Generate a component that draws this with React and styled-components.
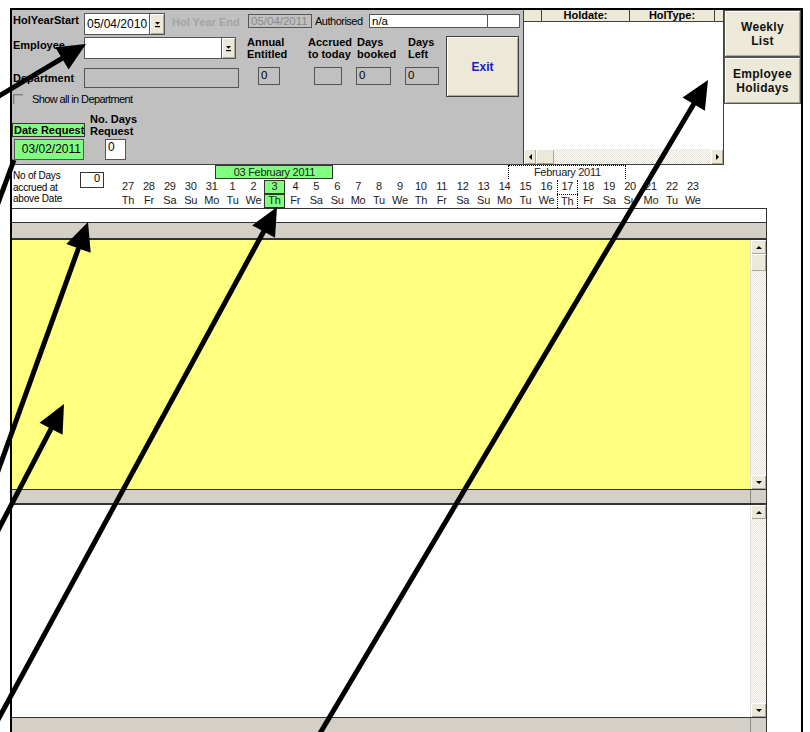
import React from "react";
import styled, { createGlobalStyle, css } from "styled-components";

const Global = createGlobalStyle`
  html, body { margin: 0; padding: 0; background: #fff; overflow: hidden; }
  body { font-family: "Liberation Sans", Arial, sans-serif; font-size: 11px; color: #000; }
  * { box-sizing: border-box; }
`;

const face = "#ece9d8";
const panel = "#c0c0c0";
const bar = "#d4d0c8";
const green = "#80ff80";
const yellow = "#ffff80";
const line = "#333";

const Page = styled.div`
  position: relative;
  width: 810px;
  height: 732px;
  padding: 8px 0 0 10px;
`;

const Frame = styled.div`
  width: 793px;
  height: 724px;
  border: 2px solid #000;
  border-bottom: none;
  display: flex;
  flex-direction: column;
  background: #fff;
`;

const TopSection = styled.div`
  display: flex;
  height: 155px;
  flex: none;
`;

const GrayPanel = styled.div`
  width: 512px;
  height: 155px;
  background: ${panel};
  border-right: 1px solid #404040;
  border-bottom: 1px solid #404040;
  display: flex;
  flex-direction: column;
`;

const Row = styled.div`
  display: flex;
  align-items: flex-start;
  height: ${(p) => p.$h || 22}px;
  margin-top: ${(p) => p.$mt || 0}px;
  flex: none;
`;

const Label = styled.div`
  font-weight: bold;
  font-size: 11px;
  line-height: 14px;
  width: ${(p) => p.$w}px;
  margin-top: ${(p) => p.$mt || 0}px;
  margin-left: ${(p) => p.$ml || 0}px;
  padding-left: ${(p) => p.$pl ?? 1}px;
  color: ${(p) => (p.$dim ? "#a4a4a4" : "#000")};
  white-space: nowrap;
  flex: none;
`;

const Plain = styled.div`
  font-size: 11px;
  line-height: 14px;
  letter-spacing: -0.5px;
  width: ${(p) => p.$w}px;
  margin-top: ${(p) => p.$mt || 0}px;
  margin-left: ${(p) => p.$ml || 0}px;
  white-space: nowrap;
  flex: none;
`;

const Box = styled.div`
  flex: none;
  width: ${(p) => p.$w}px;
  height: ${(p) => p.$h}px;
  margin-top: ${(p) => p.$mt || 0}px;
  margin-left: ${(p) => p.$ml || 0}px;
  border: 1px solid #555;
  background: ${(p) => p.$bg || "#fff"};
  color: ${(p) => p.$fg || "#000"};
  font-size: ${(p) => p.$fs || 12}px;
  line-height: ${(p) => (p.$lh ? p.$lh : p.$h - 2)}px;
  padding: 0 ${(p) => (p.$right ? 2 : 0)}px 0 ${(p) => (p.$right ? 0 : 2)}px;
  text-align: ${(p) => (p.$right ? "right" : "left")};
  white-space: nowrap;
  overflow: hidden;
`;

const DropButton = styled.div`
  flex: none;
  width: ${(p) => p.$w || 15}px;
  height: 22px;
  background: ${face};
  border: 1px solid #555;
  border-left: none;
  display: flex;
  align-items: center;
  justify-content: center;
  box-shadow: inset 1px 1px 0 #fff, inset -1px -1px 0 #aca899;
`;

const DropGlyph = () => (
  <svg width="7" height="7" viewBox="0 0 7 7">
    <polygon points="1,1 6,1 3.5,3.8" fill="#000" />
    <rect x="1" y="5" width="5" height="1.2" fill="#000" />
  </svg>
);

const Body = styled.div`
  display: flex;
  margin-top: 1px;
`;

const LeftFields = styled.div`
  width: 234px;
  display: flex;
  flex-direction: column;
  flex: none;
`;

const CheckRow = styled.div`
  display: flex;
  align-items: center;
  height: 12px;
  margin-top: 5px;
`;

const CheckBox = styled.span`
  width: 10px;
  height: 10px;
  margin-left: 1px;
  border-top: 1px solid #808080;
  border-left: 1px solid #808080;
  box-shadow: inset 1px 1px 0 #a8a8a8;
  flex: none;
`;

const CheckText = styled.span`
  margin-left: 9px;
  font-size: 11px;
  letter-spacing: -0.6px;
  line-height: 12px;
  white-space: nowrap;
`;

const GreenTag = styled.div`
  flex: none;
  width: 73px;
  height: 14px;
  margin-top: 10px;
  background: ${green};
  border: 1px solid ${line};
  font-weight: bold;
  font-size: 11px;
  line-height: 12px;
  padding-left: 1px;
  white-space: nowrap;
`;

const TwoLine = styled.div`
  font-weight: bold;
  font-size: 11px;
  line-height: 12px;
  margin-left: ${(p) => p.$ml || 0}px;
  padding-left: ${(p) => p.$pl || 0}px;
  white-space: nowrap;
`;

const Stats = styled.div`
  width: 200px;
  flex: none;
  display: grid;
  grid-template-columns: 62px 49px 50px 39px;
  grid-template-rows: 24px 18px;
  row-gap: 7px;
  align-items: start;
`;

const ExitButton = styled.div`
  width: 73px;
  height: 61px;
  flex: none;
  background: ${face};
  border: 1px solid #404040;
  box-shadow: inset 1px 1px 0 #fff, inset -1px -1px 0 #aca899;
  display: flex;
  align-items: center;
  justify-content: center;
  color: #1a1ac8;
  font-weight: bold;
  font-size: 12px;
`;

const ListBox = styled.div`
  width: 200px;
  height: 155px;
  flex: none;
  display: flex;
  flex-direction: column;
  background: #fff;
  border-right: 1px solid #404040;
  border-bottom: 1px solid #404040;
`;

const HeaderRow = styled.div`
  display: grid;
  grid-template-columns: 18px 88px 85px 1fr;
  height: 12px;
  flex: none;
  background: ${face};
  border-bottom: 1px solid #404040;
`;

const HeaderCell = styled.div`
  border-right: 1px solid #404040;
  font-weight: bold;
  font-size: 11px;
  line-height: 11px;
  text-align: center;
  &:last-child { border-right: none; }
`;

const ListBody = styled.div`
  flex: 1;
`;

const checker = css`
  background-color: #fff;
  background-image: repeating-conic-gradient(#e4e1d4 0 25%, #fff 0 50%);
  background-size: 2px 2px;
`;

const HScroll = styled.div`
  height: 15px;
  display: flex;
  flex: none;
  ${checker};
`;

const VScroll = styled.div`
  width: 16px;
  display: flex;
  flex-direction: column;
  flex: none;
  ${checker};
  border-left: 1px solid #e0ded4;
`;

const ScrollBtn = styled.div`
  flex: none;
  width: ${(p) => (p.$vertical ? "auto" : "12px")};
  height: ${(p) => (p.$vertical ? "14px" : "auto")};
  background: ${face};
  box-shadow: inset 1px 1px 0 #fff, inset -1px -1px 0 #aca899;
  display: flex;
  align-items: center;
  justify-content: center;
`;

const Thumb = styled.div`
  flex: none;
  width: ${(p) => (p.$vertical ? "auto" : "18px")};
  height: ${(p) => (p.$vertical ? "17px" : "auto")};
  background: ${face};
  box-shadow: inset 1px 1px 0 #fff, inset -1px -1px 0 #aca899;
`;

const Track = styled.div`
  flex: 1;
`;

const Tri = styled.span`
  width: 0;
  height: 0;
  ${(p) =>
    p.$dir === "up" &&
    css`border-left: 3px solid transparent; border-right: 3px solid transparent; border-bottom: 3px solid #000;`}
  ${(p) =>
    p.$dir === "down" &&
    css`border-left: 3px solid transparent; border-right: 3px solid transparent; border-top: 3px solid #000;`}
  ${(p) =>
    p.$dir === "left" &&
    css`border-top: 3px solid transparent; border-bottom: 3px solid transparent; border-right: 3px solid #000;`}
  ${(p) =>
    p.$dir === "right" &&
    css`border-top: 3px solid transparent; border-bottom: 3px solid transparent; border-left: 3px solid #000;`}
`;

const SideButtons = styled.div`
  width: 77px;
  flex: none;
  display: flex;
  flex-direction: column;
`;

const SideButton = styled.div`
  height: 47px;
  flex: none;
  background: ${face};
  border: 1px solid #555;
  box-shadow: inset 1px 1px 0 #fff, inset -1px -1px 0 #aca899;
  display: flex;
  align-items: center;
  justify-content: center;
  text-align: center;
  font-weight: bold;
  font-size: 12px;
  letter-spacing: 0.3px;
  line-height: 14px;
  color: #111;
`;

/* ---------- calendar strip ---------- */

const DateSection = styled.div`
  display: flex;
  height: 43px;
  flex: none;
`;

const AccruedLabel = styled.div`
  width: 68px;
  flex: none;
  padding: 5px 0 0 1px;
  font-size: 10px;
  line-height: 11.5px;
  letter-spacing: -0.2px;
`;

const AccruedBox = styled.div`
  width: 24px;
  height: 16px;
  flex: none;
  margin-top: 7px;
  border: 1px solid ${line};
  text-align: right;
  padding-right: 3px;
  font-size: 11px;
  line-height: 11px;
`;

const DayGrid = styled.div`
  margin-left: 13.5px;
  display: grid;
  grid-template-columns: repeat(28, 20.93px);
  grid-template-rows: 15px 14px 14px;
  color: #222;
`;

const MonthTag = styled.div`
  grid-row: 1;
  grid-column: ${(p) => p.$col - 3} / span 7;
  justify-self: center;
  width: 118px;
  height: 14px;
  text-align: center;
  font-size: 11px;
  line-height: 13px;
  letter-spacing: -0.3px;
  ${(p) =>
    p.$selected
      ? css`background: ${green}; border: 1px solid ${line};`
      : css`border: 1px dotted #000; border-bottom: none;`}
`;

const DayCell = styled.div`
  grid-row: ${(p) => p.$row};
  grid-column: ${(p) => p.$col};
  text-align: center;
  font-size: 11px;
  line-height: 13px;
  letter-spacing: -0.2px;
  ${(p) =>
    p.$selected &&
    css`background: ${green}; border: 1px solid ${line}; line-height: 11px;`}
  ${(p) =>
    p.$today &&
    css`
      border-left: 1px dotted #000;
      border-right: 1px dotted #000;
    `}
  ${(p) => p.$today && p.$row === 3 && css`border-top: 1px dotted #000; line-height: 12px;`}
`;

/* ---------- record panes ---------- */

const LowerArea = styled.div`
  width: 755px;
  flex: 1;
  display: flex;
  flex-direction: column;
`;

const Strip = styled.div`
  height: 15px;
  flex: none;
  border-top: 1px solid ${line};
  border-bottom: 1px solid ${line};
  border-right: 1px solid ${line};
`;

const GrayBar = styled.div`
  height: ${(p) => p.$h}px;
  flex: ${(p) => (p.$grow ? 1 : "none")};
  background: ${bar};
  border-right: 1px solid ${line};
  border-top: ${(p) => (p.$top ? `1px solid ${line}` : "none")};
  border-bottom: ${(p) => (p.$bottom ? `${p.$bottom}px solid ${line}` : "none")};
  display: flex;
  justify-content: flex-end;
`;

const Corner = styled.div`
  width: 16px;
  border-left: 1px solid #888;
`;

const Pane = styled.div`
  height: ${(p) => p.$h}px;
  flex: none;
  display: flex;
  background: ${(p) => p.$bg};
  border-right: 1px solid ${line};
`;

const PaneFill = styled.div`
  flex: 1;
`;

const Overlay = styled.svg`
  position: absolute;
  left: 0;
  top: 0;
  pointer-events: none;
`;

const days = [27, 28, 29, 30, 31, ...Array.from({ length: 23 }, (_, i) => i + 1)];
const names = ["Th", "Fr", "Sa", "Su", "Mo", "Tu", "We"];

const pointers = [
  { from: [-6, 99], to: [86, 44] },
  { from: [-6, 214], to: [14, 160], bare: true },
  { from: [-6, 482], to: [88, 222] },
  { from: [-6, 538], to: [64, 404] },
  { from: [-12, 738], to: [277, 207] },
  { from: [316, 740], to: [708, 80] },
];

function Pointer({ from, to, bare }) {
  const [x1, y1] = from;
  const [x2, y2] = to;
  if (bare) {
    return <line x1={x1} y1={y1} x2={x2} y2={y2} stroke="#000" strokeWidth="5" />;
  }
  const len = Math.hypot(x2 - x1, y2 - y1);
  const ux = (x2 - x1) / len;
  const uy = (y2 - y1) / len;
  const px = -uy;
  const py = ux;
  const hl = 28;
  const hw = 13;
  const bx = x2 - ux * hl;
  const by = y2 - uy * hl;
  const pts = `${x2},${y2} ${bx + px * hw},${by + py * hw} ${bx - px * hw},${by - py * hw}`;
  return (
    <g>
      <line x1={x1} y1={y1} x2={bx + ux * 3} y2={by + uy * 3} stroke="#000" strokeWidth="5" />
      <polygon points={pts} fill="#000" />
    </g>
  );
}

function VerticalScroll({ thumb }) {
  return (
    <VScroll>
      <ScrollBtn $vertical>
        <Tri $dir="up" />
      </ScrollBtn>
      {thumb && <Thumb $vertical />}
      <Track />
      <ScrollBtn $vertical>
        <Tri $dir="down" />
      </ScrollBtn>
    </VScroll>
  );
}

export default function App() {
  const selected = 7;
  const today = 21;
  return (
    <Page>
      <Global />
      <Frame>
        <TopSection>
          <GrayPanel>
            <Row $mt={3}>
              <Label $w={72}>HolYearStart</Label>
              <Box $w={66} $h={22}>05/04/2010</Box>
              <DropButton>
                <DropGlyph />
              </DropButton>
              <Label $w={76} $ml={7} $mt={2} $pl={0} $dim>
                Hol Year End
              </Label>
              <Box $w={64} $h={14} $mt={1} $bg={panel} $fg="#8a8a8a" $lh={12} $fs={11.5}>
                05/04/2011
              </Box>
              <Plain $w={54} $ml={3} $mt={1}>
                Authorised
              </Plain>
              <Box $w={119} $h={14} $mt={1} $lh={12} $fs={11.5}>
                n/a
              </Box>
              <Box $w={33} $h={14} $mt={1} $ml={-1} />
            </Row>
            <Body>
              <LeftFields>
                <Row $mt={1}>
                  <Label $w={72} $mt={1}>
                    Employee
                  </Label>
                  <Box $w={138} $h={22} />
                  <DropButton $w={14}>
                    <DropGlyph />
                  </DropButton>
                </Row>
                <Row $mt={9} $h={20}>
                  <Label $w={72} $mt={3}>
                    Department
                  </Label>
                  <Box $w={155} $h={20} $bg={panel} />
                </Row>
                <CheckRow>
                  <CheckBox />
                  <CheckText>Show all in Department</CheckText>
                </CheckRow>
                <Row $mt={8} $h={24}>
                  <GreenTag>Date Request</GreenTag>
                  <TwoLine $ml={5}>
                    No. Days
                    <br />
                    Request
                  </TwoLine>
                </Row>
                <Row $mt={2} $h={21}>
                  <Box $w={70} $h={21} $ml={2} $bg={green} $right $fs={12}>
                    03/02/2011
                  </Box>
                  <Box $w={21} $h={21} $ml={21} $lh={14} $fs={12}>
                    0
                  </Box>
                </Row>
              </LeftFields>
              <Stats>
                <TwoLine $pl={1}>
                  Annual
                  <br />
                  Entitled
                </TwoLine>
                <TwoLine>
                  Accrued
                  <br />
                  to today
                </TwoLine>
                <TwoLine>
                  Days
                  <br />
                  booked
                </TwoLine>
                <TwoLine $pl={1}>
                  Days
                  <br />
                  Left
                </TwoLine>
                <Box $w={22} $h={18} $ml={12} $bg={panel} $lh={14} $fs={11.5}>
                  0
                </Box>
                <Box $w={28} $h={18} $ml={6} $bg={panel} />
                <Box $w={35} $h={18} $ml={-1} $bg={panel} $lh={14} $fs={11.5}>
                  0
                </Box>
                <Box $w={34} $h={18} $ml={-2} $bg={panel} $lh={14} $fs={11.5}>
                  0
                </Box>
              </Stats>
              <ExitButton>Exit</ExitButton>
            </Body>
          </GrayPanel>
          <ListBox>
            <HeaderRow>
              <HeaderCell />
              <HeaderCell>Holdate:</HeaderCell>
              <HeaderCell>HolType:</HeaderCell>
              <HeaderCell />
            </HeaderRow>
            <ListBody />
            <HScroll>
              <ScrollBtn>
                <Tri $dir="left" />
              </ScrollBtn>
              <Thumb />
              <Track />
              <ScrollBtn>
                <Tri $dir="right" />
              </ScrollBtn>
            </HScroll>
          </ListBox>
          <SideButtons>
            <SideButton>
              Weekly
              <br />
              List
            </SideButton>
            <SideButton>
              Employee
              <br />
              Holidays
            </SideButton>
          </SideButtons>
        </TopSection>

        <DateSection>
          <AccruedLabel>
            No of Days
            <br />
            accrued at
            <br />
            above Date
          </AccruedLabel>
          <AccruedBox>0</AccruedBox>
          <DayGrid>
            <MonthTag $col={selected + 1} $selected>
              03 February 2011
            </MonthTag>
            <MonthTag $col={today + 1}>February 2011</MonthTag>
            {days.map((d, i) => (
              <React.Fragment key={i}>
                <DayCell $row={2} $col={i + 1} $selected={i === selected} $today={i === today}>
                  {d}
                </DayCell>
                <DayCell $row={3} $col={i + 1} $selected={i === selected} $today={i === today}>
                  {names[i % 7]}
                </DayCell>
              </React.Fragment>
            ))}
          </DayGrid>
        </DateSection>

        <LowerArea>
          <Strip />
          <GrayBar $h={17} $bottom={2} />
          <Pane $h={249} $bg={yellow}>
            <PaneFill />
            <VerticalScroll thumb />
          </Pane>
          <GrayBar $h={16} $top $bottom={2}>
            <Corner />
          </GrayBar>
          <Pane $h={212} $bg="#fff">
            <PaneFill />
            <VerticalScroll />
          </Pane>
          <GrayBar $grow $top>
            <Corner />
          </GrayBar>
        </LowerArea>
      </Frame>
      <Overlay width="810" height="732" viewBox="0 0 810 732">
        {pointers.map((p, i) => (
          <Pointer key={i} {...p} />
        ))}
      </Overlay>
    </Page>
  );
}
